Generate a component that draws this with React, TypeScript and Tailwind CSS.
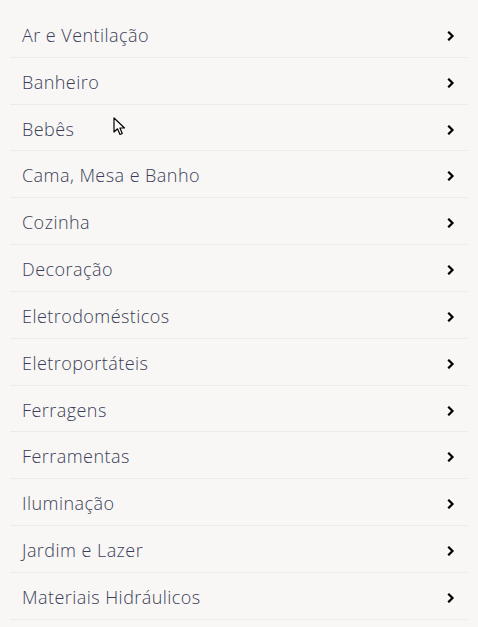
import React from 'react';

const categories = [
  'Ar e Ventilação',
  'Banheiro',
  'Bebês',
  'Cama, Mesa e Banho',
  'Cozinha',
  'Decoração',
  'Eletrodomésticos',
  'Eletroportáteis',
  'Ferragens',
  'Ferramentas',
  'Iluminação',
  'Jardim e Lazer',
  'Materiais Hidráulicos',
];

const Chevron = () => (
  <svg width="8" height="10" viewBox="0 0 8 10" className="text-black">
    <path d="M2 1.5 L5.5 5 L2 8.5" fill="none" stroke="currentColor" strokeWidth="2.2" strokeLinecap="square" />
  </svg>
);

// mouse pointer captured in the screenshot
const Pointer = () => (
  <svg width="14" height="20" viewBox="0 0 14 20" className="absolute left-[113px] top-[117px] pointer-events-none">
    <path d="M1 1 L1 15 L4.5 11.8 L7 17.5 L9.3 16.5 L6.9 11 L11.5 11 Z" fill="#fff" stroke="#000" strokeWidth="1.2" strokeLinejoin="round" />
  </svg>
);

const App = () => {
  return (
    <div className="relative min-h-[627px] w-full bg-[#f8f7f5] overflow-hidden" style={{ fontFamily: '"Open Sans", sans-serif' }}>
      <ul className="pl-[10px] pr-[11px] pt-[11px]">
        {categories.map((name) => (
          <li
            key={name}
            className="flex h-[46.83px] items-center justify-between border-b border-[#ecebe8] pl-3 pr-[12px] cursor-pointer"
          >
            <span className="pt-[3px] text-[18px] font-[350] text-[#3a3e58] tracking-[0.45px]">{name}</span>
            <span className="pt-[4px]">
              <Chevron />
            </span>
          </li>
        ))}
      </ul>
      <Pointer />
    </div>
  );
};

export default App;
